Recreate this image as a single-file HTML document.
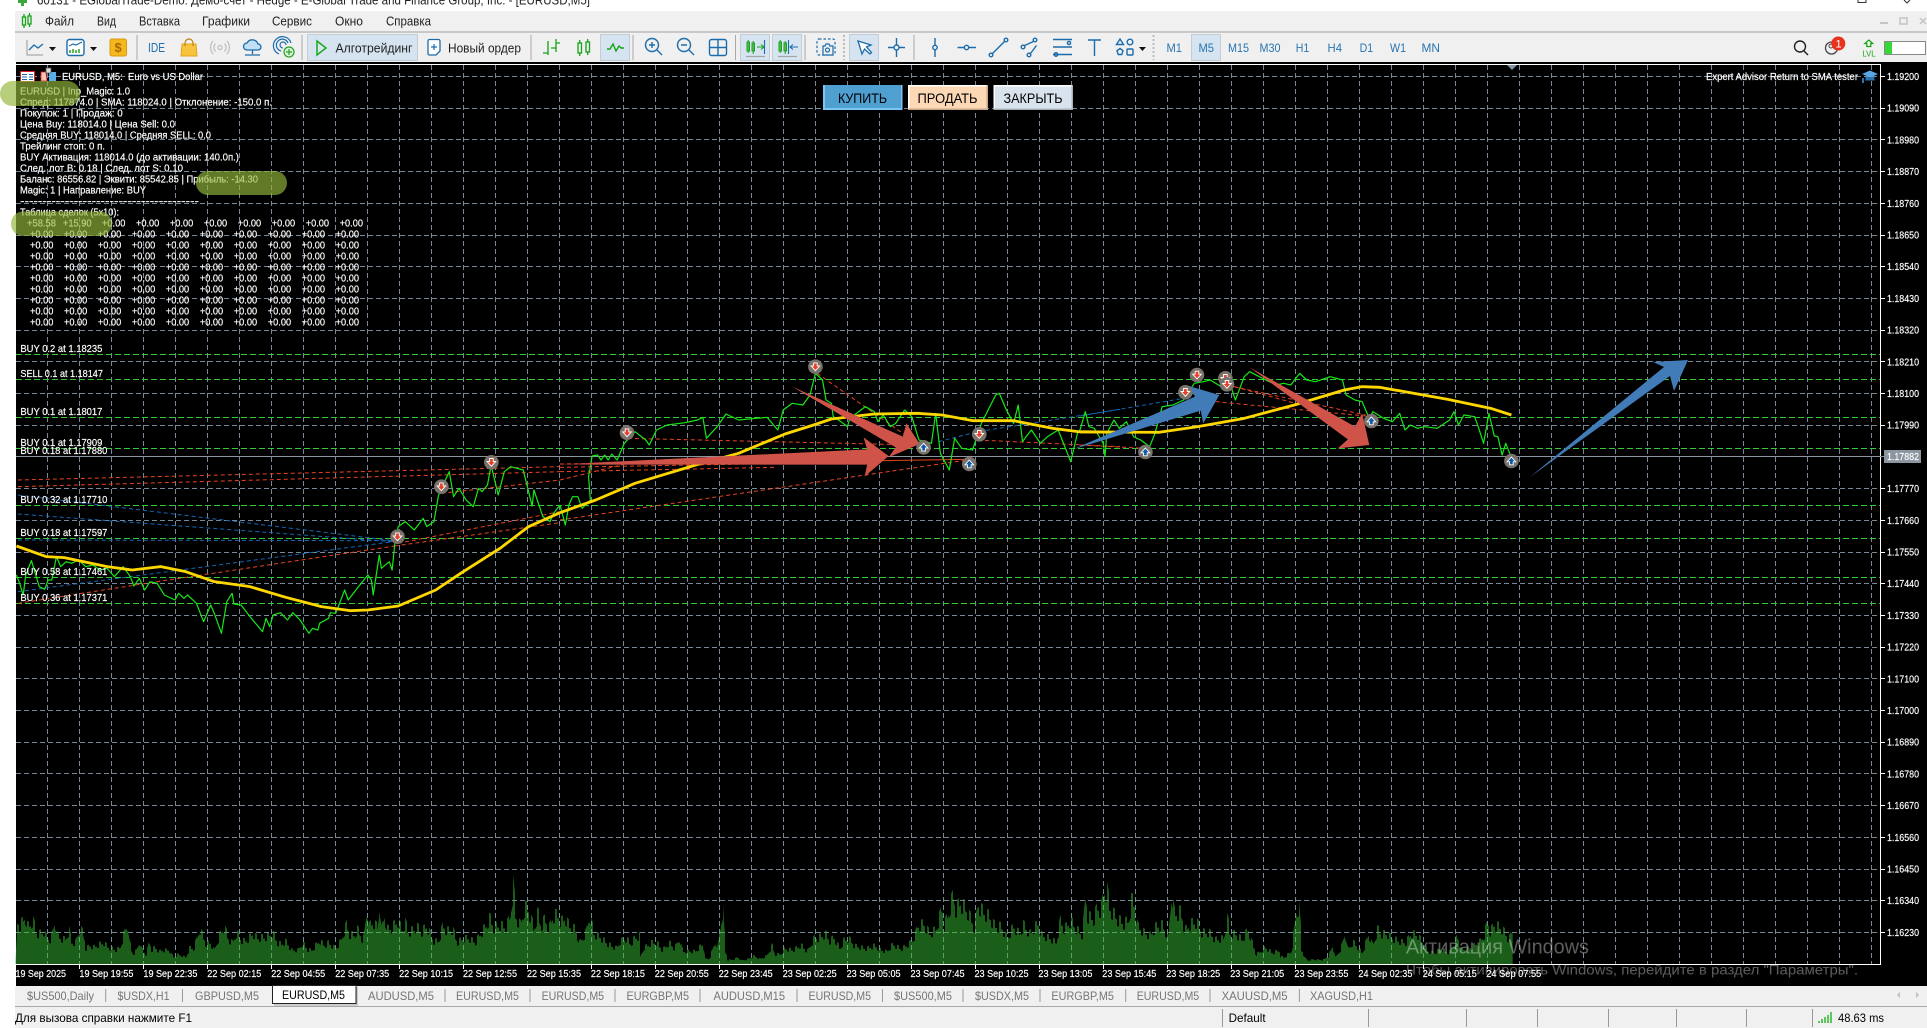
<!DOCTYPE html>
<html><head><meta charset="utf-8"><title>EURUSD,M5</title>
<style>
html,body{margin:0;padding:0;background:#fff;width:1927px;height:1028px;overflow:hidden}
svg{display:block}
text{font-family:"Liberation Sans","Noto Sans CJK SC",sans-serif;white-space:pre}
.tb{font-size:12px;fill:#2a74b0}
.mn{font-size:12.5px;fill:#222}
.tab{font-size:12px;fill:#757575}
.w{font-size:10.5px;fill:#fff;stroke:#fff;stroke-width:.18}
.ic{fill:none;stroke:#1c6cab;stroke-width:1.4}
.gl{fill:none;stroke:#32cd32;stroke-width:1;stroke-dasharray:6 3;shape-rendering:crispEdges}
.nn{vector-effect:non-scaling-stroke;fill:none}
</style></head><body>
<svg width="1927" height="1028" viewBox="0 0 1927 1028" xmlns="http://www.w3.org/2000/svg">
<defs>
<pattern id="st1" width="6" height="10" patternUnits="userSpaceOnUse" x="15.5"><rect width="1" height="10" fill="#35bd35"/></pattern>
<pattern id="st2" width="6" height="10" patternUnits="userSpaceOnUse" x="17.5"><rect width="1" height="10" fill="#35bd35"/></pattern>
<pattern id="st3" width="6" height="10" patternUnits="userSpaceOnUse" x="19.5"><rect width="1" height="10" fill="#35bd35"/></pattern>
<clipPath id="vol">
<polygon transform="translate(0 860) scale(.40816 .33333)" points="38,313 42,165 48,185 55,170 62,150 68,185 75,178 81,160 88,205 95,210 105,205 108,200 115,225 125,230 135,165 142,220 150,225 160,230 170,195 175,240 185,240 197,188 205,215 210,260 220,250 230,255 245,245 255,240 265,255 275,260 285,265 295,255 307,195 313,178 318,240 325,280 335,265 342,235 350,270 360,280 365,233 372,265 380,255 390,270 400,265 415,265 425,290 435,280 445,283 455,290 465,258 475,260 490,192 495,210 505,245 515,240 525,265 540,210 550,185 560,230 570,240 580,205 590,230 600,235 610,225 620,208 630,225 640,222 650,222 660,215 668,205 680,240 690,245 700,235 715,265 730,265 742,240 755,265 765,265 783,232 795,250 805,240 822,260 835,235 850,175 855,212 870,215 875,192 890,235 900,120 905,185 915,170 925,190 930,105 935,195 942,150 950,195 960,190 975,165 985,198 993,170 1000,205 1015,195 1022,185 1032,205 1045,185 1053,205 1062,235 1075,235 1085,182 1095,200 1110,195 1120,240 1135,225 1150,225 1165,240 1175,215 1190,185 1200,158 1210,190 1225,180 1240,190 1250,150 1258,42 1263,150 1275,180 1285,125 1292,122 1300,150 1308,195 1318,140 1325,185 1335,160 1345,195 1355,150 1365,145 1375,170 1385,155 1395,185 1410,195 1420,240 1435,208 1445,145 1455,210 1470,220 1490,245 1510,258 1520,235 1535,225 1545,245 1555,225 1568,215 1568,313"/>
<polygon transform="translate(640 860) scale(.40816 .33333)" points="0,313 0,290 10,258 28,240 42,240 55,265 72,240 85,260 97,225 105,270 120,268 135,270 155,243 160,295 170,295 185,235 190,260 204,114 208,262 215,298 225,298 240,290 250,300 265,295 280,285 295,295 310,285 325,248 330,280 345,278 355,260 375,265 395,248 410,270 428,222 435,225 455,210 465,235 475,222 490,260 500,232 512,225 525,250 540,255 555,260 575,250 590,265 605,270 620,245 640,262 665,238 675,210 680,185 695,175 710,210 725,195 740,125 745,185 755,145 768,76 772,130 785,105 795,120 805,140 820,190 828,110 840,135 855,150 870,185 885,185 900,225 915,185 930,210 940,180 955,210 975,175 985,215 1005,225 1020,240 1030,165 1040,195 1055,165 1070,195 1085,215 1091,75 1097,150 1112,160 1120,122 1130,130 1136,72 1145,60 1150,122 1170,160 1185,175 1197,165 1205,97 1212,115 1220,185 1235,205 1250,215 1265,185 1280,180 1295,225 1302,66 1310,145 1325,135 1335,200 1350,175 1365,170 1375,205 1395,205 1410,230 1430,225 1440,160 1445,210 1460,210 1475,230 1490,195 1500,240 1510,280 1520,270 1532,255 1550,275 1568,265 1568,313"/>
<polygon transform="translate(1280 860) scale(.41263 .33333)" points="0,313 0,285 10,290 28,270 40,135 47,112 52,265 65,300 80,297 105,298 118,285 128,250 135,290 148,260 158,205 165,262 178,238 190,258 200,275 215,210 225,250 237,195 245,210 260,210 272,225 290,235 305,240 318,208 335,215 345,240 360,270 375,275 390,260 410,275 430,218 440,265 465,255 485,235 495,215 503,168 510,205 518,180 530,185 540,195 555,230 563,198 563,313"/>
</clipPath>
<g id="mD"><circle r="7.3" fill="#7a736c"/><polygon points="-1.800,-3.800 1.800,-3.800 1.800,-.8 4.300,-.8 0,4 -4.300,-.8 -1.800,-.8" fill="#e5402a" stroke="#fff" stroke-width=".9"/></g>
<g id="mU"><circle r="7.3" fill="#7a736c"/><polygon points="-1.800,3.800 1.800,3.800 1.800,.8 4.300,.8 0,-4 -4.300,.8 -1.800,.8" fill="#0a5aa8" stroke="#fff" stroke-width=".9"/></g>
<linearGradient id="rf" gradientUnits="userSpaceOnUse" x1="-20" y1="0" x2="90" y2="0"><stop offset="0" stop-color="#cf5349" stop-opacity="0"/><stop offset="1" stop-color="#cf5349"/></linearGradient>
</defs>

<!-- title bar -->
<rect width="1927" height="1028" fill="#fff"/>
<path d="M18 0h9v3h-3v3h-3V3h-3z" fill="#3ca53c"/>
<text x="37" y="4.5" font-size="12.5" fill="#222" textLength="553" lengthAdjust="spacingAndGlyphs">60131 - EGlobalTrade-Demo: Демо-счет - Hedge - E-Global Trade and Finance Group, Inc. - [EURUSD,M5]</text>
<path d="M1858 3V0M1866 3V0M1858 2.5h8M1904 0l3 3 3-3" stroke="#333" fill="none" stroke-width="1"/>

<!-- menu + toolbar -->
<rect x="15" y="11" width="1912" height="51" fill="#f0f0f0"/>
<rect x="15" y="31.5" width="1912" height="1" fill="#a0a0a0"/>
<g fill="none" stroke="#17a217" stroke-width="1.3"><rect x="22.5" y="17" width="3" height="8"/><rect x="28" y="16" width="3" height="8"/><path d="M24 14v3M24 25v3M29.500 13v3M29.500 24v3"/></g>
<g class="mn">
<text class="mn" x="45" y="25.500" textLength="29" lengthAdjust="spacingAndGlyphs">Файл</text>
<text class="mn" x="97" y="25.500" textLength="19" lengthAdjust="spacingAndGlyphs">Вид</text>
<text class="mn" x="139" y="25.500" textLength="41" lengthAdjust="spacingAndGlyphs">Вставка</text>
<text class="mn" x="202" y="25.500" textLength="48" lengthAdjust="spacingAndGlyphs">Графики</text>
<text class="mn" x="272" y="25.500" textLength="40" lengthAdjust="spacingAndGlyphs">Сервис</text>
<text class="mn" x="335" y="25.500" textLength="28" lengthAdjust="spacingAndGlyphs">Окно</text>
<text class="mn" x="386" y="25.500" textLength="45" lengthAdjust="spacingAndGlyphs">Справка</text>
</g>
<path d="M1880 23h8" stroke="#c4c4c4" stroke-width="2"/><rect x="1900" y="18" width="7" height="6" fill="none" stroke="#c4c4c4" stroke-width="1.500"/><path d="M1920 18l6 6m0-6l-6 6" stroke="#c4c4c4" stroke-width="1.500"/>

<!-- highlighted buttons -->
<g fill="#d6e4f2" stroke="#c4ccd4" stroke-width="1">
<rect x="307.500" y="34.500" width="110" height="26"/>
<rect x="600.500" y="34.500" width="29" height="26"/>
<rect x="740.500" y="34.500" width="29" height="26"/>
<rect x="772.500" y="34.500" width="29" height="26"/>
<rect x="849.500" y="34.500" width="29" height="26"/>
<rect x="1191.500" y="34.500" width="29" height="26"/>
</g>
<!-- separators -->
<path d="M137 35v25M302 35v25M531 35v25M633 35v25M735.500 35v25M805 35v25M914 35v25" stroke="#a8a8a8" stroke-width="1"/>
<path d="M844 35v25M1153.500 35v25" stroke="#bbb" stroke-width="2" stroke-dasharray="2 2"/>

<!-- left toolbar icons -->
<path d="M27 40v15h16" fill="none" stroke="#999" stroke-width="1"/>
<path d="M29 50l5-5 4 3 5-4" fill="none" stroke="#1c6cab" stroke-width="1.300"/>
<path d="M49 47h7l-3.500 4z" fill="#111"/>
<rect x="67" y="39.500" width="17" height="16" rx="2.500" fill="#fff" stroke="#1c6cab" stroke-width="1.400"/>
<path d="M69 46l4-2 3 1 6-3" fill="none" stroke="#1c6cab" stroke-width="1.200"/>
<path d="M70 53v-3M73 53v-4M76 53v-3M79 53v-4" stroke="#2ca02c" stroke-width="1.500"/>
<path d="M90 47h7l-3.500 4z" fill="#111"/>
<rect x="110" y="39" width="16.500" height="17" rx="2" fill="#f4b81c" stroke="#d89a10"/>
<text x="114.500" y="52" font-size="13" font-weight="bold" fill="#a86c00">$</text>
<text x="148" y="52" font-size="12.500" fill="#1f6fb2" textLength="17" lengthAdjust="spacingAndGlyphs">IDE</text>
<path d="M182 44h14l1 12h-16z" fill="#f6c33a" stroke="#e0a51c"/><path d="M185 46v-3a4 4 0 0 1 8 0v3" fill="none" stroke="#b98412" stroke-width="1.200"/>
<g fill="none" stroke="#bdbdbd" stroke-width="1.200"><circle cx="220" cy="47.500" r="2"/><path d="M215.500 43.500a6 6 0 0 0 0 8M224.500 43.500a6 6 0 0 1 0 8M213 41a10 10 0 0 0 0 13M227 41a10 10 0 0 1 0 13"/></g>
<path d="M247 50a3.500 3.500 0 0 1 0-7 6 6 0 0 1 11 1 3 3 0 0 1 0 6z" fill="#bfe0f5" stroke="#1c6cab" stroke-width="1.300"/><path d="M252.500 50v4M245 55h15" stroke="#1c6cab" stroke-width="1.300"/>
<g fill="none" stroke="#1c6cab" stroke-width="1.200"><path d="M279 54a9 9 0 1 1 12-11M281 51a6 6 0 1 1 7-8M283 48a3 3 0 1 1 3-3"/></g>
<circle cx="289" cy="52" r="5" fill="#d8f5d8" stroke="#2ca02c" stroke-width="1.200"/><path d="M289 49v6M286 52h6" stroke="#2ca02c" stroke-width="1.200"/>
<path d="M317 41l9 7-9 7z" fill="none" stroke="#1fa51f" stroke-width="1.500"/>
<text x="335.500" y="52.500" font-size="12.500" fill="#222" textLength="77" lengthAdjust="spacingAndGlyphs">Алготрейдинг</text>
<path d="M428 41a1.500 1.500 0 0 1 1.500-1.500h9a1.500 1.500 0 0 1 1.500 1.500v10l-4 4h-6.500a1.500 1.500 0 0 1-1.500-1.500z" fill="#fff" stroke="#1c6cab" stroke-width="1.300"/><path d="M434 44v6M431 47h6" stroke="#1c6cab" stroke-width="1.200"/>
<text x="448" y="52.500" font-size="12.500" fill="#222" textLength="73" lengthAdjust="spacingAndGlyphs">Новый ордер</text>
<path d="M548 41v14M543 53h5M556 39v13M556 43h4M551 48h5" fill="none" stroke="#17a217" stroke-width="1.300"/>
<g fill="none" stroke="#17a217" stroke-width="1.300"><rect x="578" y="43" width="3.500" height="10"/><rect x="586" y="42" width="3.500" height="10"/><path d="M579.700 40v3M579.700 53v3M587.700 39v3M587.700 52v3"/></g>
<path d="M607 49h3l3-5 3 7 3-5 2 2h3" fill="none" stroke="#17a217" stroke-width="1.400"/>

<!-- zoom etc -->
<g class="ic">
<circle cx="652" cy="45" r="6.500"/><path d="M657 50l5 5M649 45h6M652 42v6"/>
<circle cx="684" cy="45" r="6.500"/><path d="M689 50l5 5M681 45h6"/>
<rect x="709.500" y="39.500" width="17" height="16" rx="2"/><path d="M718 39.500v16M709.500 47.500h17"/>
</g>
<g fill="none" stroke="#17a217" stroke-width="1"><rect x="747" y="42" width="2.500" height="9"/><rect x="752" y="43" width="2.500" height="8"/><path d="M748.200 40v13M753.200 41v13"/><rect x="779" y="42" width="2.500" height="9"/><rect x="784" y="43" width="2.500" height="8"/><path d="M780.200 40v13M785.200 41v13"/></g>
<path d="M757 47h6m-2-2.500l3 2.500-3 2.500" fill="none" stroke="#17a217" stroke-width="1.100"/>
<path d="M764.500 40v14M798 47h-7m2-2.500l-3 2.500 3 2.500M788.500 40v14" fill="none" stroke="#1c6cab" stroke-width="1.100"/>
<path d="M746 56.500h19M778 56.500h19" stroke="#a6a6a6" stroke-width="1.200"/>
<rect x="817" y="39" width="18" height="16" rx="2" fill="none" stroke="#1c6cab" stroke-width="1.200" stroke-dasharray="2.500 2"/>
<path d="M823 46h2l1-2h3l1 2h3v9h-10z" fill="#f0f0f0" stroke="#1c6cab" stroke-width="1.200"/><circle cx="827.500" cy="50" r="2" fill="none" stroke="#1c6cab" stroke-width="1.200"/>
<path d="M858 41l4 13 2.500-5 5.500 5 1.500-1.500-5-5.500 4.500-2z" fill="#fff" stroke="#1c6cab" stroke-width="1.300"/>
<g class="ic">
<circle cx="896.500" cy="47.500" r="2.500"/><path d="M896.500 38v7M896.500 50v7M888 47.500h6M899 47.500h6"/>
<circle cx="935" cy="47.500" r="2.200"/><path d="M935 38v7M935 50v7"/>
<circle cx="966.500" cy="47.500" r="2.200"/><path d="M957.500 47.500h7M969 47.500h7"/>
<circle cx="991" cy="55" r="1.800"/><circle cx="1006" cy="40" r="1.800"/><path d="M992.500 53.500l12-12"/>
<circle cx="1023" cy="47" r="1.800"/><circle cx="1029" cy="55" r="1.800"/><circle cx="1035" cy="40" r="1.800"/><path d="M1024.500 45.500l9-4M1030.500 53.500l6-8"/>
<path d="M1053 39.500h19M1053 47h19M1053 54.500h19"/><circle cx="1069" cy="43" r="1.600"/><circle cx="1056" cy="54.500" r="1.800"/>
<path d="M1088 40h13M1094.500 40v16"/>
<path d="M1120 39l3.500 5.500h-7z"/><circle cx="1130" cy="42" r="2.800"/><path d="M1120 48.500l3 2.200-1.200 3.800h-3.600l-1.200-3.800z"/><rect x="1127" y="49" width="6" height="6" rx="1"/>
</g>
<path d="M1139 47h7l-3.500 4z" fill="#111"/>
<text class="tb" x="1166.500" y="52" textLength="15.500" lengthAdjust="spacingAndGlyphs">M1</text>
<text class="tb" x="1198.500" y="52" textLength="15.500" lengthAdjust="spacingAndGlyphs">M5</text>
<text class="tb" x="1228" y="52" textLength="21" lengthAdjust="spacingAndGlyphs">M15</text>
<text class="tb" x="1259.500" y="52" textLength="21" lengthAdjust="spacingAndGlyphs">M30</text>
<text class="tb" x="1295.700" y="52" textLength="13.500" lengthAdjust="spacingAndGlyphs">H1</text>
<text class="tb" x="1327.500" y="52" textLength="14.500" lengthAdjust="spacingAndGlyphs">H4</text>
<text class="tb" x="1359.600" y="52" textLength="13.500" lengthAdjust="spacingAndGlyphs">D1</text>
<text class="tb" x="1390" y="52" textLength="16" lengthAdjust="spacingAndGlyphs">W1</text>
<text class="tb" x="1421.500" y="52" textLength="18.500" lengthAdjust="spacingAndGlyphs">MN</text>
<circle cx="1800" cy="46.500" r="5.500" fill="none" stroke="#222" stroke-width="1.400"/><path d="M1804 51l4 4" stroke="#222" stroke-width="1.500"/>
<circle cx="1831.500" cy="48" r="6" fill="none" stroke="#444" stroke-width="1.300"/><circle cx="1831" cy="46" r="2" fill="none" stroke="#444"/>
<circle cx="1838.300" cy="43.500" r="7" fill="#e8321e"/><text x="1835.500" y="47.500" font-size="11" fill="#fff">1</text>
<path d="M1868.800 40l4 3.500h-2v3h-4v-3h-2z" fill="none" stroke="#17a217" stroke-width="1.200"/>
<text x="1862.500" y="56.500" font-size="8.500" fill="#17a217" textLength="13" lengthAdjust="spacingAndGlyphs">LVL</text>
<rect x="1884.500" y="41.500" width="41" height="13" fill="#fff" stroke="#888"/><rect x="1885" y="42" width="7" height="12" fill="#38d738"/>

<!-- chart -->
<rect x="16" y="62" width="1911" height="924" fill="#000"/>
<path d="M16 64.500H1880.500V964.500H16" fill="none" stroke="#fff" stroke-width="1"/>

<!-- grid -->
<path fill="none" stroke="#778899" stroke-width="1" stroke-dasharray="5 3" shape-rendering="crispEdges" d="M47.500 65V964M79.500 65V964M111.500 65V964M143.500 65V964M175.500 65V964M207.500 65V964M239.500 65V964M271.500 65V964M303.500 65V964M335.500 65V964M367.500 65V964M399.500 65V964M431.500 65V964M463.500 65V964M495.500 65V964M527.500 65V964M559.500 65V964M591.500 65V964M623.500 65V964M655.500 65V964M687.500 65V964M719.500 65V964M751.500 65V964M783.500 65V964M815.500 65V964M847.500 65V964M879.500 65V964M911.500 65V964M943.500 65V964M975.500 65V964M1007.500 65V964M1039.500 65V964M1071.500 65V964M1103.500 65V964M1135.500 65V964M1167.500 65V964M1199.500 65V964M1231.500 65V964M1263.500 65V964M1295.500 65V964M1327.500 65V964M1359.500 65V964M1391.500 65V964M1423.500 65V964M1455.500 65V964M1487.500 65V964M1519.500 65V964M1551.500 65V964M1583.500 65V964M1615.500 65V964M1647.500 65V964M1679.500 65V964M1711.500 65V964M1743.500 65V964M1775.500 65V964M1807.500 65V964M1839.500 65V964M1871.500 65V964"/>
<path fill="none" stroke="#778899" stroke-width="1" stroke-dasharray="5 3" shape-rendering="crispEdges" d="M16 76.500H1880M16 108.500H1880M16 139.500H1880M16 171.500H1880M16 203.500H1880M16 235.500H1880M16 266.500H1880M16 298.500H1880M16 330.500H1880M16 361.500H1880M16 393.500H1880M16 425.500H1880M16 488.500H1880M16 520.500H1880M16 552.500H1880M16 583.500H1880M16 615.500H1880M16 647.500H1880M16 678.500H1880M16 710.500H1880M16 742.500H1880M16 773.500H1880M16 805.500H1880M16 837.500H1880M16 869.500H1880M16 900.500H1880M16 932.500H1880"/>

<!-- volume -->
<rect x="15" y="865" width="1500" height="99" fill="url(#st1)" clip-path="url(#vol)"/>
<g transform="translate(0 144.600) scale(1 .85)"><rect x="15" y="865" width="1500" height="99" fill="url(#st2)" clip-path="url(#vol)"/></g>
<g transform="translate(0 241) scale(1 .75)"><rect x="15" y="865" width="1500" height="99" fill="url(#st3)" clip-path="url(#vol)"/></g>

<!-- order levels -->
<path class="gl" d="M16 354.500H1880M16 379.500H1880M16 417.500H1880M16 448.500H1880M16 505.500H1880M16 538.500H1880M16 577.500H1880M16 603.500H1880"/>
<path d="M16 456.500H1884" stroke="#8c96a0" stroke-width="1" shape-rendering="crispEdges"/>

<!-- trade lines -->
<g transform="translate(0 330) scale(.35714 .33333)">
<g stroke="#e8431f" stroke-width="1" stroke-dasharray="4 3">
<path class="nn" d="M50 450L1568 410"/><path class="nn" d="M50 470L1568 425"/><path class="nn" d="M50 820L440 755 1105 648"/><path class="nn" d="M1115 640L1568 545"/><path class="nn" d="M1105 648L1568 578"/><path class="nn" d="M1236 490L1568 450"/>
</g>
<g stroke="#1268b8" stroke-width="1" stroke-dasharray="4 3">
<path class="nn" d="M50 495L1100 632"/><path class="nn" d="M50 552L1100 635"/><path class="nn" d="M50 630L1100 632"/><path class="nn" d="M50 785L1100 635"/>
</g>
</g>
<g transform="translate(560 330) scale(.35714 .33333)">
<g stroke="#e8431f" stroke-width="1" stroke-dasharray="4 3">
<path class="nn" d="M0 402L900 390"/><path class="nn" d="M0 412L900 395"/><path class="nn" d="M0 425L600 412"/><path class="nn" d="M0 450L190 400"/><path class="nn" d="M0 570L1140 390"/><path class="nn" d="M720 130L1000 340"/><path class="nn" d="M190 325L1000 345"/><path class="nn" d="M1170 330L1568 350"/>
</g>
<path class="nn" d="M900 392L1140 388" stroke="#e8431f" stroke-width="1"/>
<path class="nn" d="M1060 335L1170 305 1568 238" stroke="#1268b8" stroke-width="1" stroke-dasharray="4 3"/>
</g>
<g transform="translate(1080 330) scale(.35714 .33333)">
<g stroke="#e8431f" stroke-width="1" stroke-dasharray="4 3">
<path class="nn" d="M0 345L180 355"/><path class="nn" d="M380 215L800 258"/><path class="nn" d="M430 170L800 255"/><path class="nn" d="M415 165L620 225"/>
</g>
<path class="nn" d="M0 258L290 205" stroke="#1268b8" stroke-width="1" stroke-dasharray="4 3"/>
</g>

<!-- price line -->
<g stroke-linejoin="round">
<g transform="translate(0 330) scale(.35714 .33333)"><path class="nn" stroke="#16e816" stroke-width="1.200" d="M46 735L55 760 65 795 72 735 88 692 100 735 110 770 125 778 135 750 145 750 158 680 170 710 185 695 200 700 220 690 240 710 260 705 280 720 300 715 320 740 345 710 365 740 375 768 390 745 405 780 420 755 440 760 460 795 490 810 500 790 515 805 525 795 550 820 570 875 590 825 600 850 620 910 635 815 650 790 655 822 675 825 700 860 735 905 745 865 755 890 765 855 785 848 805 870 820 848 840 870 865 910 875 895 890 900 895 880 920 865 925 848 940 850 965 780 975 810 1000 775 1030 735 1040 750 1045 795 1062 675 1068 715 1090 695 1098 720 1105 645 1115 590 1135 575 1160 600 1185 565 1195 590 1215 575 1228 495 1258 425 1270 500 1285 475 1305 510 1325 530 1340 475 1350 485 1365 465 1375 405 1395 495 1412 425 1430 410 1465 420 1490 528 1495 480 1520 560 1540 575 1550 550 1568 525"/></g>
<g transform="translate(560 330) scale(.35714 .33333)"><path class="nn" stroke="#16e816" stroke-width="1.200" d="M0 525L15 585 25 525 35 500 50 500 62 535 85 510 80 440 90 378 105 375 115 390 125 375 135 390 145 372 160 390 180 340 210 305 240 330 250 345 270 300 300 285 350 278 385 270 400 262 410 325 440 290 465 252 500 270 550 265 580 262 610 300 625 240 650 220 680 225 700 195 715 130 735 150 745 210 760 220 765 260 780 270 805 290 810 270 830 250 855 230 880 245 890 275 905 255 925 290 940 280 965 240 985 260 1005 330 1040 340 1052 250 1065 370 1090 420 1105 325 1125 355 1155 360 1180 280 1220 195 1230 190 1250 240 1270 280 1283 225 1295 335 1305 320 1320 300 1345 340 1365 320 1395 300 1430 395 1450 305 1456 300"/></g>
<g transform="translate(1080 330) scale(.35714 .33333)"><path class="nn" stroke="#16e816" stroke-width="1.200" d="M0 300L15 245 25 290 40 295 65 340 70 380 75 310 95 270 110 295 130 275 150 320 170 330 195 350 210 310 230 230 260 225 290 210 320 160 345 155 365 150 395 170 420 160 435 210 460 140 475 125 520 150 550 165 570 160 590 165 615 130 635 150 660 155 700 140 735 150 745 195 770 210 790 215 810 265 820 245 850 265 875 275 895 250 910 300 925 285 945 295 965 290 1000 295 1035 270 1047 245 1060 285 1075 255 1105 260 1115 290 1130 340 1145 250 1160 318 1170 320 1182 375 1192 340 1205 375"/></g>
<g transform="translate(0 330) scale(.35714 .33333)"><path class="nn" stroke="#ffd700" stroke-width="2.800" d="M46 648L130 680 180 683 300 710 370 720 450 710 520 725 600 755 700 770 800 802 900 830 980 842 1030 840 1115 828 1220 780 1290 730 1400 655 1480 590 1568 548"/></g>
<g transform="translate(560 330) scale(.35714 .33333)"><path class="nn" stroke="#ffd700" stroke-width="2.800" d="M0 548L100 510 210 460 380 405 500 370 630 312 710 285 760 267 880 252 1000 250 1070 255 1155 272 1270 272 1380 295 1450 305 1568 307"/></g>
<g transform="translate(1080 330) scale(.35714 .33333)"><path class="nn" stroke="#ffd700" stroke-width="2.800" d="M0 306L220 307 330 290 460 265 600 225 740 180 790 170 840 172 1030 208 1150 235 1208 255"/></g>
</g>

<!-- annotation arrows -->
<g transform="translate(560 330) scale(.35714 .33333)">
<polygon fill="#cf5349" points="650,170 960,320 970,280 1007,342 920,382 940,352"/>
<polygon fill="url(#rf)" points="-20,404 860,358 850,322 920,378 853,440 860,404"/>
</g>
<g transform="translate(1080 330) scale(.35714 .33333)">
<polygon fill="#417cb8" points="-20,358 322,200 305,168 390,195 345,280 338,242"/>
<polygon fill="#cf5349" points="475,112 770,290 790,250 810,345 722,355 750,328"/>
</g>
<polygon fill="#417cb8" points="1530,477 1664,367 1653,362 1688,360 1674,391 1670,376"/>

<!-- markers -->
<use href="#mD" x="397.500" y="536.700"/><use href="#mD" x="441.400" y="486.700"/><use href="#mD" x="491.400" y="462.300"/>
<use href="#mD" x="627" y="432.700"/><use href="#mD" x="815.400" y="366.700"/><use href="#mD" x="979.300" y="434.300"/>
<use href="#mD" x="1185.400" y="392.300"/><use href="#mD" x="1197" y="375"/><use href="#mD" x="1225.400" y="378.300"/><use href="#mD" x="1227" y="384.300"/>
<use href="#mU" x="923.600" y="447.300"/><use href="#mU" x="969.300" y="464"/><use href="#mU" x="1145.400" y="452"/><use href="#mU" x="1371.400" y="421"/><use href="#mU" x="1511.400" y="461"/>

<!-- chart header text -->
<rect x="20.500" y="71.500" width="14" height="10" fill="#fff" stroke="#e02020"/><path d="M22 74.500h5M22 77h5M22 79.500h5M29 74.500h4M29 77h4M29 79.500h4" stroke="#1c6cab" stroke-width="1"/>
<path d="M41 72h5l1 9h-6z" fill="#f8c4b8" stroke="#e02020" stroke-width=".8"/><path d="M49 72h7v9h-7z" fill="#58b0e8"/><rect x="46" y="68" width="5" height="5" fill="#ddd" stroke="#555" stroke-width=".8"/>
<text class="w" x="62" y="80" textLength="141" lengthAdjust="spacingAndGlyphs">EURUSD, M5:  Euro vs US Dollar</text>
<text class="w" x="1706" y="80" textLength="152" lengthAdjust="spacingAndGlyphs">Expert Advisor Return to SMA tester</text>
<path d="M1862 74l8-3.500 8 3.500-8 3.500z" fill="#58a8e8"/><path d="M1865.500 77v3.500h9V77" fill="#2a74b0"/><rect x="1862" y="78" width="2" height="5" fill="#2a74b0"/>
<polygon points="1507,65 1517,65 1512,70" fill="#8494a4"/>

<g class="w">
<text class="w" x="20" y="94.500" textLength="110" lengthAdjust="spacingAndGlyphs">EURUSD | Inp_Magic: 1.0</text>
<text class="w" x="20" y="105.500" textLength="252" lengthAdjust="spacingAndGlyphs">Спред: 117874.0 | SMA: 118024.0 | Отклонение: -150.0 п.</text>
<text class="w" x="20" y="116.500" textLength="102.700" lengthAdjust="spacingAndGlyphs">Покупок: 1 | Продаж: 0</text>
<text class="w" x="20" y="127.500" textLength="155" lengthAdjust="spacingAndGlyphs">Цена Buy: 118014.0 | Цена Sell: 0.0</text>
<text class="w" x="20" y="138.500" textLength="191" lengthAdjust="spacingAndGlyphs">Средняя BUY: 118014.0 | Средняя SELL: 0.0</text>
<text class="w" x="20" y="149.500" textLength="85" lengthAdjust="spacingAndGlyphs">Трейлинг стоп: 0 п.</text>
<text class="w" x="20" y="160.500" textLength="219" lengthAdjust="spacingAndGlyphs">BUY Активация: 118014.0 (до активации: 140.0п.)</text>
<text class="w" x="20" y="171.500" textLength="163" lengthAdjust="spacingAndGlyphs">След. лот B: 0.18 | След. лот S: 0.10</text>
<text class="w" x="20" y="182.500" textLength="238" lengthAdjust="spacingAndGlyphs">Баланс: 86556.82 | Эквити: 85542.85 | Прибыль: -14.30</text>
<text class="w" x="20" y="193.500" textLength="126" lengthAdjust="spacingAndGlyphs">Magic: 1 | Направление: BUY</text>
<text class="w" x="20" y="204.500" textLength="179" lengthAdjust="spacingAndGlyphs">----------------------------------------</text>
<text class="w" x="20" y="215.500" textLength="99" lengthAdjust="spacingAndGlyphs">Таблица сделок (5x10):</text>
<text class="w" x="27" y="226.500" textLength="29" lengthAdjust="spacingAndGlyphs">+58.58</text>
<text class="w" x="63" y="226.500" textLength="28.500" lengthAdjust="spacingAndGlyphs">+15.90</text>
<text class="w" x="102" y="226.500" word-spacing="9.200" textLength="261" lengthAdjust="spacingAndGlyphs">+0.00 +0.00 +0.00 +0.00 +0.00 +0.00 +0.00 +0.00</text>
<text class="w" x="30" y="237.300" word-spacing="9.200" textLength="329" lengthAdjust="spacingAndGlyphs">+0.00 +0.00 +0.00 +0.00 +0.00 +0.00 +0.00 +0.00 +0.00 +0.00</text>
<text class="w" x="30" y="248.300" word-spacing="9.200" textLength="329" lengthAdjust="spacingAndGlyphs">+0.00 +0.00 +0.00 +0.00 +0.00 +0.00 +0.00 +0.00 +0.00 +0.00</text>
<text class="w" x="30" y="259.300" word-spacing="9.200" textLength="329" lengthAdjust="spacingAndGlyphs">+0.00 +0.00 +0.00 +0.00 +0.00 +0.00 +0.00 +0.00 +0.00 +0.00</text>
<text class="w" x="30" y="270.300" word-spacing="9.200" textLength="329" lengthAdjust="spacingAndGlyphs">+0.00 +0.00 +0.00 +0.00 +0.00 +0.00 +0.00 +0.00 +0.00 +0.00</text>
<text class="w" x="30" y="281.300" word-spacing="9.200" textLength="329" lengthAdjust="spacingAndGlyphs">+0.00 +0.00 +0.00 +0.00 +0.00 +0.00 +0.00 +0.00 +0.00 +0.00</text>
<text class="w" x="30" y="292.300" word-spacing="9.200" textLength="329" lengthAdjust="spacingAndGlyphs">+0.00 +0.00 +0.00 +0.00 +0.00 +0.00 +0.00 +0.00 +0.00 +0.00</text>
<text class="w" x="30" y="303.300" word-spacing="9.200" textLength="329" lengthAdjust="spacingAndGlyphs">+0.00 +0.00 +0.00 +0.00 +0.00 +0.00 +0.00 +0.00 +0.00 +0.00</text>
<text class="w" x="30" y="314.300" word-spacing="9.200" textLength="329" lengthAdjust="spacingAndGlyphs">+0.00 +0.00 +0.00 +0.00 +0.00 +0.00 +0.00 +0.00 +0.00 +0.00</text>
<text class="w" x="30" y="325.300" word-spacing="9.200" textLength="329" lengthAdjust="spacingAndGlyphs">+0.00 +0.00 +0.00 +0.00 +0.00 +0.00 +0.00 +0.00 +0.00 +0.00</text>

<text class="w" x="20.400" y="352" textLength="82" lengthAdjust="spacingAndGlyphs">BUY 0.2 at 1.18235</text>
<text class="w" x="20.400" y="377" textLength="82.500" lengthAdjust="spacingAndGlyphs">SELL 0.1 at 1.18147</text>
<text class="w" x="20.400" y="415" textLength="82" lengthAdjust="spacingAndGlyphs">BUY 0.1 at 1.18017</text>
<text class="w" x="20.400" y="446" textLength="82" lengthAdjust="spacingAndGlyphs">BUY 0.1 at 1.17909</text>
<text class="w" x="20.400" y="454" textLength="87" lengthAdjust="spacingAndGlyphs">BUY 0.18 at 1.17880</text>
<text class="w" x="20.400" y="503" textLength="87" lengthAdjust="spacingAndGlyphs">BUY 0.32 at 1.17710</text>
<text class="w" x="20.400" y="536" textLength="87" lengthAdjust="spacingAndGlyphs">BUY 0.18 at 1.17597</text>
<text class="w" x="20.400" y="575" textLength="87" lengthAdjust="spacingAndGlyphs">BUY 0.58 at 1.17461</text>
<text class="w" x="20.400" y="601" textLength="87" lengthAdjust="spacingAndGlyphs">BUY 0.36 at 1.17371</text>
</g>

<!-- highlight pills -->
<rect x="0" y="81" width="80" height="25" rx="12.500" fill="#93b73c" fill-opacity=".667"/>
<rect x="196" y="171" width="91" height="24" rx="12" fill="#93b73c" fill-opacity=".667"/>
<rect x="11" y="211.500" width="101" height="24.500" rx="12" fill="#93b73c" fill-opacity=".667"/>

<!-- trade buttons -->
<rect x="823" y="85" width="79.500" height="25" fill="#7cc4f4"/><rect x="825" y="85" width="76" height="23" fill="#4f9fd0"/>
<text x="862.500" y="103" font-size="14" text-anchor="middle" fill="#000" textLength="49" lengthAdjust="spacingAndGlyphs">КУПИТЬ</text>
<rect x="908" y="85" width="80" height="25" fill="#c8a888"/><rect x="908" y="85" width="78.500" height="23.500" fill="#fff"/><rect x="909.500" y="86.500" width="77" height="22" fill="#fdd8b5"/>
<text x="947.500" y="103" font-size="14" text-anchor="middle" fill="#000" textLength="60" lengthAdjust="spacingAndGlyphs">ПРОДАТЬ</text>
<rect x="993.500" y="85" width="79.500" height="25" fill="#a8b0b8"/><rect x="993.500" y="85" width="78" height="23.500" fill="#fff"/><rect x="995" y="86.500" width="76.500" height="22" fill="#d9e3ee"/>
<text x="1033" y="103" font-size="14" text-anchor="middle" fill="#000" textLength="59" lengthAdjust="spacingAndGlyphs">ЗАКРЫТЬ</text>

<!-- price axis -->
<path stroke="#fff" stroke-width="1" shape-rendering="crispEdges" d="M1881 76.500h4M1881 108.500h4M1881 139.500h4M1881 171.500h4M1881 203.500h4M1881 235.500h4M1881 266.500h4M1881 298.500h4M1881 330.500h4M1881 361.500h4M1881 393.500h4M1881 425.500h4M1881 488.500h4M1881 520.500h4M1881 552.500h4M1881 583.500h4M1881 615.500h4M1881 647.500h4M1881 678.500h4M1881 710.500h4M1881 742.500h4M1881 773.500h4M1881 805.500h4M1881 837.500h4M1881 869.500h4M1881 900.500h4M1881 932.500h4"/>
<g>
<text class="w" x="1887" y="80" textLength="32" lengthAdjust="spacingAndGlyphs">1.19200</text>
<text class="w" x="1887" y="111.700" textLength="32" lengthAdjust="spacingAndGlyphs">1.19090</text>
<text class="w" x="1887" y="143.400" textLength="32" lengthAdjust="spacingAndGlyphs">1.18980</text>
<text class="w" x="1887" y="175.100" textLength="32" lengthAdjust="spacingAndGlyphs">1.18870</text>
<text class="w" x="1887" y="206.800" textLength="32" lengthAdjust="spacingAndGlyphs">1.18760</text>
<text class="w" x="1887" y="238.500" textLength="32" lengthAdjust="spacingAndGlyphs">1.18650</text>
<text class="w" x="1887" y="270.200" textLength="32" lengthAdjust="spacingAndGlyphs">1.18540</text>
<text class="w" x="1887" y="301.900" textLength="32" lengthAdjust="spacingAndGlyphs">1.18430</text>
<text class="w" x="1887" y="333.600" textLength="32" lengthAdjust="spacingAndGlyphs">1.18320</text>
<text class="w" x="1887" y="365.300" textLength="32" lengthAdjust="spacingAndGlyphs">1.18210</text>
<text class="w" x="1887" y="397" textLength="32" lengthAdjust="spacingAndGlyphs">1.18100</text>
<text class="w" x="1887" y="428.700" textLength="32" lengthAdjust="spacingAndGlyphs">1.17990</text>
<text class="w" x="1887" y="492.100" textLength="32" lengthAdjust="spacingAndGlyphs">1.17770</text>
<text class="w" x="1887" y="523.800" textLength="32" lengthAdjust="spacingAndGlyphs">1.17660</text>
<text class="w" x="1887" y="555.500" textLength="32" lengthAdjust="spacingAndGlyphs">1.17550</text>
<text class="w" x="1887" y="587.200" textLength="32" lengthAdjust="spacingAndGlyphs">1.17440</text>
<text class="w" x="1887" y="618.900" textLength="32" lengthAdjust="spacingAndGlyphs">1.17330</text>
<text class="w" x="1887" y="650.600" textLength="32" lengthAdjust="spacingAndGlyphs">1.17220</text>
<text class="w" x="1887" y="682.300" textLength="32" lengthAdjust="spacingAndGlyphs">1.17100</text>
<text class="w" x="1887" y="714" textLength="32" lengthAdjust="spacingAndGlyphs">1.17000</text>
<text class="w" x="1887" y="745.700" textLength="32" lengthAdjust="spacingAndGlyphs">1.16890</text>
<text class="w" x="1887" y="777.400" textLength="32" lengthAdjust="spacingAndGlyphs">1.16780</text>
<text class="w" x="1887" y="809.100" textLength="32" lengthAdjust="spacingAndGlyphs">1.16670</text>
<text class="w" x="1887" y="840.800" textLength="32" lengthAdjust="spacingAndGlyphs">1.16560</text>
<text class="w" x="1887" y="872.500" textLength="32" lengthAdjust="spacingAndGlyphs">1.16450</text>
<text class="w" x="1887" y="904.200" textLength="32" lengthAdjust="spacingAndGlyphs">1.16340</text>
<text class="w" x="1887" y="935.900" textLength="32" lengthAdjust="spacingAndGlyphs">1.16230</text>
</g>
<rect x="1884" y="450" width="37" height="13" fill="#8c96a0"/>
<text class="w" x="1887" y="460" textLength="32" lengthAdjust="spacingAndGlyphs">1.17882</text>

<!-- time axis -->
<path stroke="#fff" stroke-width="1" d="M15.500 965v4M79.500 965v4M143.500 965v4M207.500 965v4M271.500 965v4M335.500 965v4M399.500 965v4M463.500 965v4M527.500 965v4M591.500 965v4M655.500 965v4M719.500 965v4M783.500 965v4M847.500 965v4M911.500 965v4M975.500 965v4M1039.500 965v4M1103.500 965v4M1167.500 965v4M1231.500 965v4M1295.500 965v4M1359.500 965v4M1423.500 965v4M1487.500 965v4"/>
<g>
<text class="w" x="15.500" y="977" textLength="50.500" lengthAdjust="spacingAndGlyphs">19 Sep 2025</text>
<text class="w" x="79.400" y="977" textLength="54" lengthAdjust="spacingAndGlyphs">19 Sep 19:55</text>
<text class="w" x="143.400" y="977" textLength="54" lengthAdjust="spacingAndGlyphs">19 Sep 22:35</text>
<text class="w" x="207.300" y="977" textLength="54" lengthAdjust="spacingAndGlyphs">22 Sep 02:15</text>
<text class="w" x="271.200" y="977" textLength="54" lengthAdjust="spacingAndGlyphs">22 Sep 04:55</text>
<text class="w" x="335.200" y="977" textLength="54" lengthAdjust="spacingAndGlyphs">22 Sep 07:35</text>
<text class="w" x="399.100" y="977" textLength="54" lengthAdjust="spacingAndGlyphs">22 Sep 10:15</text>
<text class="w" x="463" y="977" textLength="54" lengthAdjust="spacingAndGlyphs">22 Sep 12:55</text>
<text class="w" x="527" y="977" textLength="54" lengthAdjust="spacingAndGlyphs">22 Sep 15:35</text>
<text class="w" x="590.900" y="977" textLength="54" lengthAdjust="spacingAndGlyphs">22 Sep 18:15</text>
<text class="w" x="654.800" y="977" textLength="54" lengthAdjust="spacingAndGlyphs">22 Sep 20:55</text>
<text class="w" x="718.700" y="977" textLength="54" lengthAdjust="spacingAndGlyphs">22 Sep 23:45</text>
<text class="w" x="782.700" y="977" textLength="54" lengthAdjust="spacingAndGlyphs">23 Sep 02:25</text>
<text class="w" x="846.600" y="977" textLength="54" lengthAdjust="spacingAndGlyphs">23 Sep 05:05</text>
<text class="w" x="910.500" y="977" textLength="54" lengthAdjust="spacingAndGlyphs">23 Sep 07:45</text>
<text class="w" x="974.500" y="977" textLength="54" lengthAdjust="spacingAndGlyphs">23 Sep 10:25</text>
<text class="w" x="1038.400" y="977" textLength="54" lengthAdjust="spacingAndGlyphs">23 Sep 13:05</text>
<text class="w" x="1102.300" y="977" textLength="54" lengthAdjust="spacingAndGlyphs">23 Sep 15:45</text>
<text class="w" x="1166.200" y="977" textLength="54" lengthAdjust="spacingAndGlyphs">23 Sep 18:25</text>
<text class="w" x="1230.200" y="977" textLength="54" lengthAdjust="spacingAndGlyphs">23 Sep 21:05</text>
<text class="w" x="1294.400" y="977" textLength="54" lengthAdjust="spacingAndGlyphs">23 Sep 23:55</text>
<text class="w" x="1358.400" y="977" textLength="54" lengthAdjust="spacingAndGlyphs">24 Sep 02:35</text>
<text class="w" x="1422.800" y="977" textLength="54" lengthAdjust="spacingAndGlyphs">24 Sep 05:15</text>
<text class="w" x="1486.300" y="977" textLength="55" lengthAdjust="spacingAndGlyphs">24 Sep 07:55</text>
</g>

<!-- tabs -->
<rect x="15" y="986" width="1912" height="42" fill="#f0f0f0"/>
<rect x="15" y="1006" width="1912" height="1" fill="#a8a8a8"/>
<path stroke="#999" stroke-width="1" d="M105.700 989v13M182.500 989v13M445 989v13M530 989v13M615 989v13M700 989v13M797 989v13M882.500 989v13M963 989v13M1040 989v13M1125.700 989v13M1210 989v13M1299.400 989v13"/>
<rect x="272.500" y="985.500" width="83.500" height="18" fill="#fff" stroke="#222" stroke-width="1"/><path d="M357 987v18H274" stroke="#aaa" fill="none"/>
<text class="tab" x="27" y="1000" textLength="67" lengthAdjust="spacingAndGlyphs">$US500,Daily</text>
<text class="tab" x="117.500" y="1000" textLength="52" lengthAdjust="spacingAndGlyphs">$USDX,H1</text>
<text class="tab" x="195" y="1000" textLength="64" lengthAdjust="spacingAndGlyphs">GBPUSD,M5</text>
<text x="282" y="999" font-size="12" fill="#000" textLength="63" lengthAdjust="spacingAndGlyphs">EURUSD,M5</text>
<text class="tab" x="368" y="1000" textLength="66" lengthAdjust="spacingAndGlyphs">AUDUSD,M5</text>
<text class="tab" x="456" y="1000" textLength="63" lengthAdjust="spacingAndGlyphs">EURUSD,M5</text>
<text class="tab" x="541.600" y="1000" textLength="62.500" lengthAdjust="spacingAndGlyphs">EURUSD,M5</text>
<text class="tab" x="626.500" y="1000" textLength="62.500" lengthAdjust="spacingAndGlyphs">EURGBP,M5</text>
<text class="tab" x="713.500" y="1000" textLength="71.500" lengthAdjust="spacingAndGlyphs">AUDUSD,M15</text>
<text class="tab" x="808.500" y="1000" textLength="62.500" lengthAdjust="spacingAndGlyphs">EURUSD,M5</text>
<text class="tab" x="894" y="1000" textLength="58" lengthAdjust="spacingAndGlyphs">$US500,M5</text>
<text class="tab" x="975" y="1000" textLength="54" lengthAdjust="spacingAndGlyphs">$USDX,M5</text>
<text class="tab" x="1051.400" y="1000" textLength="62.500" lengthAdjust="spacingAndGlyphs">EURGBP,M5</text>
<text class="tab" x="1136.700" y="1000" textLength="62.500" lengthAdjust="spacingAndGlyphs">EURUSD,M5</text>
<text class="tab" x="1221.600" y="1000" textLength="66" lengthAdjust="spacingAndGlyphs">XAUUSD,M5</text>
<text class="tab" x="1310" y="1000" textLength="63" lengthAdjust="spacingAndGlyphs">XAGUSD,H1</text>
<path d="M1900 992v6l-3-3zM1916 992v6l3-3z" fill="#c0c0c0"/>

<!-- status -->
<text x="15" y="1022" font-size="12" fill="#000" textLength="177" lengthAdjust="spacingAndGlyphs">Для вызова справки нажмите F1</text>
<text x="1228.600" y="1022" font-size="12" fill="#000" textLength="37" lengthAdjust="spacingAndGlyphs">Default</text>
<path stroke="#999" stroke-width="1" d="M1222.500 1009v18M1368.500 1009v18M1466.500 1009v18M1537.500 1009v18M1608.500 1009v18M1676.500 1009v18M1746.500 1009v18M1812.500 1009v18"/>
<path stroke="#2eb82e" stroke-width="1.500" d="M1819 1023v-2M1822 1023v-4M1825 1023v-6M1828 1023v-8M1831 1023v-11"/>
<text x="1838" y="1022" font-size="12" fill="#000" textLength="46" lengthAdjust="spacingAndGlyphs">48.63 ms</text>

<!-- watermark -->
<text x="1406" y="953.500" font-size="20" fill="#fff" fill-opacity=".36" textLength="183" lengthAdjust="spacingAndGlyphs">Активация Windows</text>
<text x="1406" y="974.500" font-size="14" fill="#fff" fill-opacity=".36" textLength="452" lengthAdjust="spacingAndGlyphs">Чтобы активировать Windows, перейдите в раздел "Параметры".</text>
</svg>
</body></html>
